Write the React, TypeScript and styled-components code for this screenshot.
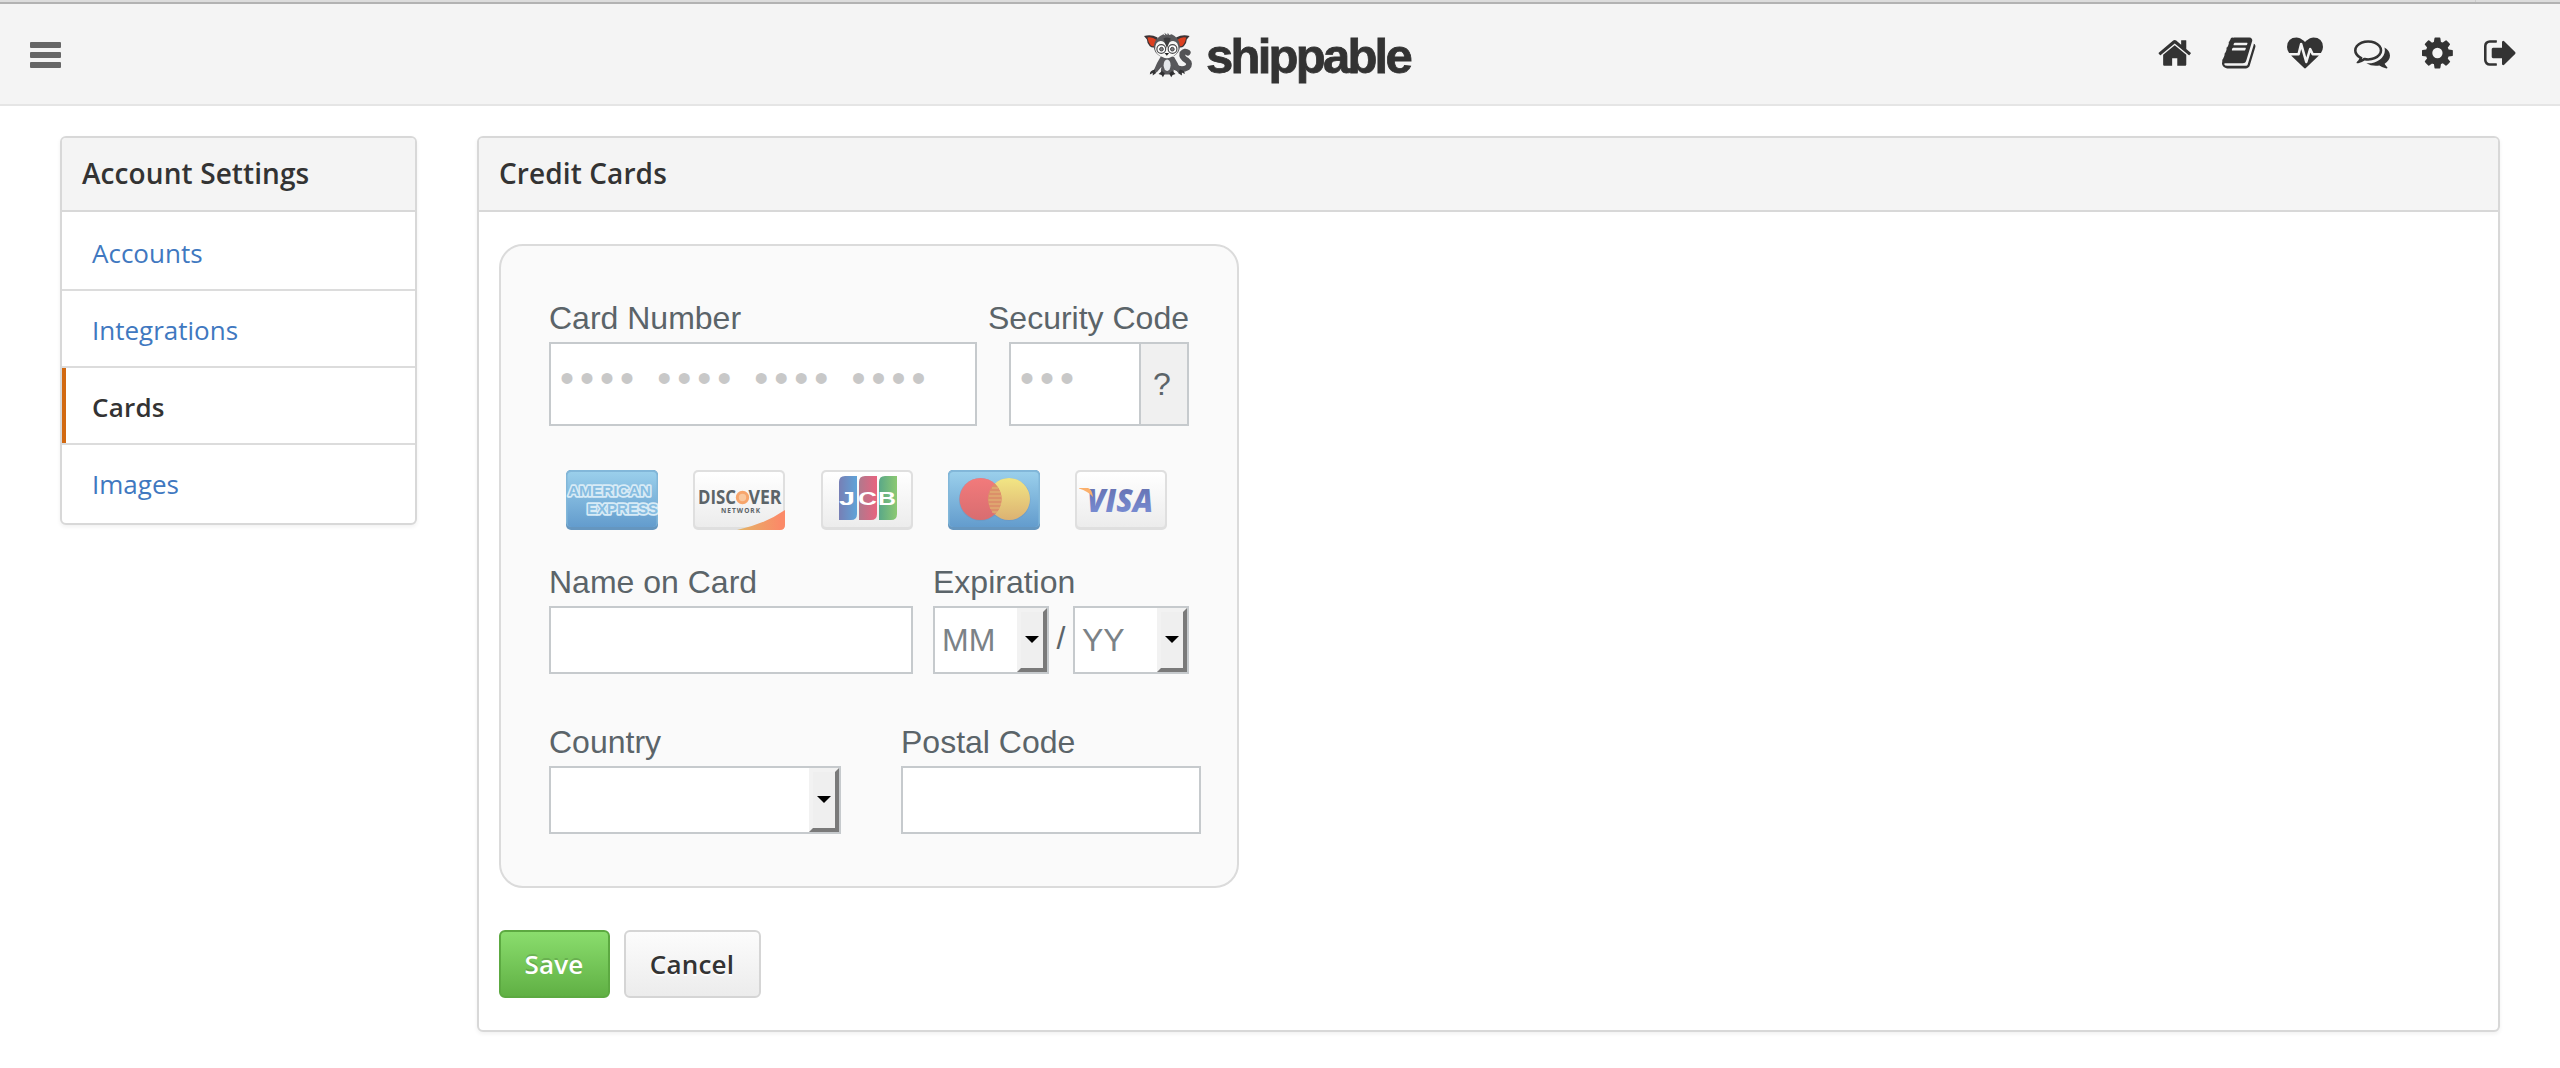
import React from 'react';
import styled, { createGlobalStyle } from 'styled-components';

const GlobalStyle = createGlobalStyle`
  *, *::before, *::after { box-sizing: border-box; }
  body {
    margin: 0;
    background: #fff;
    color: #333;
    font-family: 'Open Sans', 'Noto Sans', sans-serif;
  }
`;

const sans = `'Liberation Sans', Arial, sans-serif`;

/* ---------- top bar ---------- */

const BrowserEdge = styled.div`
  display: flex;
  justify-content: flex-end;
  height: 4px;
  background: #dcdcdc;
  border-bottom: 2px solid #b2b2b2;
  padding-right: 84px;
`;

const EdgeTick = styled.span`
  width: 1px;
  height: 2px;
  background: #cbcbcb;
`;

const Header = styled.header`
  display: grid;
  grid-template-columns: 1fr auto 1fr;
  height: 102px;
  background: #f4f4f4;
  border-bottom: 2px solid #e5e5e5;
  padding: 0 44px 0 30px;
`;

const MenuButton = styled.button`
  display: flex;
  flex-direction: column;
  justify-self: start;
  align-self: start;
  gap: 4.3px;
  margin: 38px 0 0;
  padding: 0;
  border: 0;
  background: none;
`;

const MenuBar = styled.span`
  width: 31px;
  height: 5.8px;
  border-radius: 1px;
  background: #666;
`;

const Brand = styled.a`
  display: flex;
  align-items: flex-start;
  width: 266px;
  gap: 12.5px;
  margin: 28px -4px 0 4px;
`;

const BrandName = styled.span`
  font: bold 49px/54px ${sans};
  letter-spacing: -2.75px;
  -webkit-text-stroke: 0.8px #333;
  margin-top: -3px;
  color: #333;
`;

const HeaderNav = styled.nav`
  display: flex;
  justify-self: end;
  align-items: flex-start;
  gap: 31.3px;
  padding-top: 31px;
  color: #333;
`;

const Glyph = styled.svg`
  display: block;
  height: 36px;
  fill: currentColor;
`;

/* ---------- page ---------- */

const Page = styled.main`
  display: flex;
  align-items: flex-start;
  gap: 60px;
  padding: 30px 60px 36px;
`;

const Panel = styled.section<{ $width?: number }>`
  ${(p) => (p.$width ? `width: ${p.$width}px; flex: none;` : 'flex: 1;')}
  border: 2px solid #d8d8d8;
  border-radius: 6px;
  background: #fff;
  box-shadow: 0 2px 4px rgba(0, 0, 0, 0.06);
  overflow: hidden;
`;

const PanelTitle = styled.h2`
  margin: 0;
  height: 74px;
  padding: 0 20px;
  border-bottom: 2px solid #d8d8d8;
  background: #f4f4f4;
  font-size: 28px;
  font-weight: 600;
  letter-spacing: 0.1px;
  line-height: 70px;
  white-space: nowrap;
`;

const MenuItem = styled.a<{ $active?: boolean }>`
  display: block;
  height: 77px;
  padding-left: 30px;
  border-bottom: 2px solid #dcdcdc;
  box-shadow: ${(p) => (p.$active ? 'inset 4px 0 #d26911' : 'none')};
  color: ${(p) => (p.$active ? '#333' : '#4078c0')};
  font-size: 26px;
  font-weight: ${(p) => (p.$active ? 600 : 400)};
  letter-spacing: ${(p) => (p.$active ? '0.2px' : 'normal')};
  line-height: 78px;
  text-decoration: none;

  &:first-child { height: 79px; line-height: 82px; }
  &:last-child { height: 78px; border-bottom: 0; }
`;

const MenuList = styled.nav``;

const PanelBody = styled.div`
  padding: 32px 20px;
`;

const CardForm = styled.form`
  width: 740px;
  height: 644px;
  padding: 54px 48px 0;
  border: 2px solid #dbdbdb;
  border-radius: 24px;
  background: #fafafa;
  font: 32px/36px ${sans};
  color: #5b6469;
`;

const Row = styled.div<{ $gap: number; $top?: number }>`
  display: flex;
  gap: ${(p) => p.$gap}px;
  margin-top: ${(p) => p.$top ?? 0}px;
`;

const Field = styled.div<{ $width: number; $end?: boolean }>`
  display: flex;
  flex: none;
  flex-direction: column;
  align-items: ${(p) => (p.$end ? 'flex-end' : 'flex-start')};
  gap: 6px;
  width: ${(p) => p.$width}px;
`;

const Label = styled.label`
  white-space: nowrap;
`;

const Input = styled.input`
  display: block;
  width: 100%;
  height: 68px;
  padding: 0 8px;
  border: 2px solid #c6cacd;
  border-radius: 0;
  background: #fff;
  font: 32px/36px ${sans};
  color: #5b6469;
  outline: none;
`;

const DotInput = styled(Input)`
  height: 84px;
  padding: 0 9px 12px 9px;
  font-size: 40px;
  letter-spacing: 6px;

  &::placeholder { color: #c8c8c8; opacity: 1; }
`;

const CodeGroup = styled.div`
  display: flex;
  width: 100%;
`;

const HelpButton = styled.button`
  flex: none;
  width: 48px;
  height: 84px;
  padding: 0 4px 0 0;
  border: 2px solid #c6cacd;
  border-left: 0;
  background: #f0f0f0;
  font: 32px/36px ${sans};
  color: #5b6469;
`;

const CardLogos = styled.div`
  display: flex;
  gap: 35.25px;
  margin-top: 44px;
  padding-left: 17px;
`;

const CardSvg = styled.svg`
  display: block;
  flex: none;
  width: 92px;
  height: 60px;
`;

const OutlinedText = styled.text`
  paint-order: stroke;
  stroke: #d8ebf6;
  stroke-width: 3.4px;
  stroke-linejoin: round;
`;

const SelectBox = styled.div<{ $width: number }>`
  display: flex;
  justify-content: space-between;
  width: ${(p) => p.$width}px;
  height: 68px;
  border: 2px solid #c6cacd;
  background: #fff;
  color: #7b8287;
`;

const SelectText = styled.span`
  padding: 14px 0 0 7px;
`;

const SelectArrow = styled.span`
  display: flex;
  align-items: center;
  justify-content: center;
  width: 30px;
  border: 4px solid;
  border-color: #f2f2f2 #7a7a7a #7a7a7a #f2f2f2;
  background: #efefef;

  &::after {
    content: '';
    margin-top: -1px;
    border: 7px solid transparent;
    border-top-color: #000;
    border-bottom: 0;
  }
`;

const Expiry = styled.div`
  display: flex;
  width: 100%;
`;

const Slash = styled.span`
  width: 24px;
  padding-top: 14px;
  text-align: center;
`;

const Actions = styled.div`
  display: flex;
  gap: 14px;
  margin-top: 42px;
`;

const Button = styled.button<{ $primary?: boolean; $width: number }>`
  width: ${(p) => p.$width}px;
  height: 68px;
  padding: 0 1px 0 0;
  border: 2px solid ${(p) => (p.$primary ? '#5ca941' : '#d5d5d5')};
  border-radius: 6px;
  background: ${(p) =>
    p.$primary
      ? 'linear-gradient(#8add6d, #60b044)'
      : 'linear-gradient(#fcfcfc, #ececec)'};
  color: ${(p) => (p.$primary ? '#fff' : '#333')};
  font: 600 26px/64px 'Open Sans', sans-serif;
  letter-spacing: 0.2px;
  text-shadow: ${(p) =>
    p.$primary ? '0 -2px 0 rgba(0, 0, 0, 0.15)' : '0 2px 0 rgba(255, 255, 255, 0.9)'};
`;

/* ---------- drawings ---------- */

const icons = [
  {
    name: 'Home', x: 0, w: 1664,
    d: 'M1408 992v480q0 26-19 45t-45 19h-384v-384h-256v384h-384q-26 0-45-19t-19-45v-480q0-1 .5-3t.5-3l575-474 575 474q1 2 1 6zm223-69l-62 74q-8 9-21 11h-3q-13 0-21-7l-692-577-692 577q-12 8-24 7-13-2-21-11l-62-74q-8-10-7-23.5t11-21.5l719-599q32-26 76-26t76 26l244 204v-195q0-14 9-23t23-9h192q14 0 23 9t9 23v408l219 182q10 8 11 21.5t-7 23.5z',
  },
  {
    name: 'Docs', x: 64, w: 1664,
    d: 'M1703 478q40 57 18 129l-275 906q-19 64-76.5 107.5t-122.5 43.5h-923q-77 0-148.5-53.5t-99.5-131.5q-24-67-2-127 0-4 3-27t4-37q1-8-3-21.5t-3-19.5q2-11 8-21t16.5-23.5 16.5-23.5q23-38 45-91.5t30-91.5q3-10 .5-30t-.5-28q3-11 17-28t17-23q21-36 42-92t25-90q1-9-2.5-32t.5-28q4-13 22-30.5t22-22.5q19-26 42.5-84.5t27.5-96.5q1-8-3-25.5t-2-26.5q2-8 9-18t18-23 17-21q8-12 16.5-30.5t15-35 16-36 19.5-32 26.5-23.5 36-11.5 47.5 5.5l-1 3q38-9 51-9h761q74 0 114 56t18 130l-274 906q-36 119-71.5 153.5t-128.5 34.5h-869q-27 0-38 15-11 16-1 43 24 70 144 70h923q29 0 56-15.5t35-41.5l300-987q7-22 5-57 38 15 59 43zm-1064 2q-4 13 2 22.5t20 9.5h608q13 0 25.5-9.5t16.5-22.5l21-64q4-13-2-22.5t-20-9.5h-608q-13 0-25.5 9.5t-16.5 22.5zm-83 256q-4 13 2 22.5t20 9.5h608q13 0 25.5-9.5t16.5-22.5l21-64q4-13-2-22.5t-20-9.5h-608q-13 0-25.5 9.5t-16.5 22.5z',
  },
  {
    name: 'Status', x: 0, w: 1792,
    d: 'M1280 1024h305q-5 6-10 10.5t-9 7.5l-3 4-623 600q-18 18-44 18t-44-18l-624-602q-5-2-21-20h369q22 0 39.5-13.5t22.5-34.5l70-281 190 667q6 20 23 33t39 13q21 0 38-13t23-33l146-485 56 112q18 35 57 35zm512-428q0 145-103 300h-369l-111-221q-8-17-25.5-27t-36.5-8q-45 5-56 46l-129 430-196-686q-6-20-23.5-33t-39.5-13-39 13.5-22 34.5l-116 464h-423q-103-155-103-300 0-220 127-344t351-124q62 0 126.5 21.5t120 58 95.5 68.5 76 68q36-36 76-68t95.5-68.5 120-58 126.5-21.5q224 0 351 124t127 344z',
  },
  {
    name: 'Support', x: 0, w: 1792,
    d: 'M704 384q-153 0-286 52t-211.5 141-78.5 191q0 82 53 158t149 132l97 56-35 84q34-20 62-39l44-31 53 10q78 14 153 14 153 0 286-52t211.5-141 78.5-191-78.5-191-211.5-141-286-52zm0-128q191 0 353.5 68.5t256.5 186.5 94 257-94 257-256.5 186.5-353.5 68.5q-86 0-176-16-124 88-278 128-36 9-86 16h-3q-11 0-20.5-8t-11.5-21q-1-3-1-6.5t.5-6.5 2-6l2.5-5 3.5-5.5 4-5 4.5-5 4-4.5q5-6 23-25t26-29.5 22.5-29 25-38.5 20.5-44q-124-72-195-177t-71-224q0-139 94-257t256.5-186.5 353.5-68.5zm822 1169q10 24 20.5 44t25 38.5 22.5 29 26 29.5 23 25q1 1 4 4.5t4.5 5 4 5 3.5 5.5l2.5 5 2 6 .5 6.5-1 6.5q-3 14-13 22t-22 7q-50-7-86-16-154-40-278-128-90 16-176 16-271 0-472-132 58 4 88 4 161 0 309-45t264-129q125-92 192-212t67-254q0-77-23-152 129 71 204 178t75 230q0 120-71 224.5t-195 176.5z',
  },
  {
    name: 'Settings', x: 128, w: 1536,
    d: 'M1152 896q0-106-75-181t-181-75-181 75-75 181 75 181 181 75 181-75 75-181zm512-109v222q0 12-8 23t-20 13l-185 28q-19 54-39 91 35 50 107 138 10 12 10 25t-9 23q-27 37-99 108t-94 71q-12 0-26-9l-138-108q-44 23-91 38-16 136-29 186-7 28-36 28h-222q-14 0-24.5-8.5t-11.5-21.5l-28-184q-49-16-90-37l-141 107q-10 9-25 9-14 0-25-11-126-114-165-168-7-10-7-23 0-12 8-23 15-21 51-66.5t54-70.5q-27-50-41-99l-183-27q-13-2-21-12.5t-8-23.5v-222q0-12 8-23t19-13l186-28q14-46 39-92-40-57-107-138-10-12-10-24 0-10 9-23 26-36 98.5-107.5t94.5-71.5q13 0 26 10l138 107q44-23 91-38 16-136 29-186 7-28 36-28h222q14 0 24.5 8.5t11.5 21.5l28 184q49 16 90 37l142-107q9-9 24-9 13 0 25 10 129 119 165 170 7 8 7 22 0 12-8 23-15 21-51 66.5t-54 70.5q26 50 41 98l183 28q13 2 21 12.5t8 23.5z',
  },
  {
    name: 'Sign out', x: 64, w: 1600,
    d: 'M704 1440q0 4 1 20t.5 26.5-3 23.5-10 19.5-20.5 6.5h-320q-119 0-203.5-84.5t-84.5-203.5v-704q0-119 84.5-203.5t203.5-84.5h320q13 0 22.5 9.5t9.5 22.5q0 4 1 20t.5 26.5-3 23.5-10 19.5-20.5 6.5h-320q-66 0-113 47t-47 113v704q0 66 47 113t113 47h312l11.5 1 11.5 3 8 5.5 7 9 2 13.5zm928-544q0 26-19 45l-544 544q-19 19-45 19t-45-19-19-45v-288h-448q-26 0-45-19t-19-45v-384q0-26 19-45t45-19h448v-288q0-26 19-45t45-19 45 19l544 544q19 19 19 45z',
  },
];

const Mascot = () => (
  <svg width="51" height="47" viewBox="0 0 51 47">
    <path d="M32 35.500Q39 39.500 44.500 36Q48.500 32 44 28.500Q38.500 25.500 39.500 21.500Q42 18 45 20.500" fill="none" stroke="#535356" strokeWidth="6" strokeLinecap="round" />
    <path d="M0 3.500Q7 1 14 5L12 14.500Q9 16.500 6 14Q3 11 3 7Z" fill="#3c3436" />
    <path d="M47 3.500Q40 1 33 5L35 14.500Q38 16.500 41 14Q44 11 44 7Z" fill="#3c3436" />
    <path d="M3.500 5Q8 3.500 13 7.500L11 13.500Q8.500 15 6.500 12.500Q4.500 10 3.500 5Z" fill="#dc4020" />
    <path d="M43.500 5Q39 3.500 34 7.500L36 13.500Q38.500 15 40.500 12.500Q42.500 10 43.500 5Z" fill="#dc4020" />
    <path d="M17 25Q13 31 10 39L13 41L18 35Q16 43 20 43H28Q32 43 30 35L35 41L38 39Q35 31 31 25Z" fill="#58585b" />
    <path d="M11 38Q6 39 6 43L9 41.500V44L12.500 41.500ZM37 38Q42 39 42 42.500L39 41V44L35 41.500Z" fill="#333335" />
    <path d="M20 1.500L22 3L21 0L24 2.500L24.500 0L26 2.500L28.500 1.500Q36.500 5 37 14Q37 20 31 24Q23.500 28 16 24Q10 20 10 14Q11 5 20 1.500Z" fill="#59595c" />
    <path d="M11.500 17Q11.500 9 17 8.500Q21 8.500 23.500 14Q26 8.500 30 8.500Q35.500 9 35.500 17Q34 23 28 25Q23.500 27.500 19 25Q13 23 11.500 17Z" fill="#f7f7f5" />
    <path d="M20 6Q23.500 4 27.500 6L23.600 16Z" fill="#3b3b3d" />
    <circle cx="17.800" cy="16.800" r="4.500" fill="#fff" stroke="#48484a" strokeWidth="1.200" />
    <circle cx="29.400" cy="16.800" r="4.500" fill="#fff" stroke="#48484a" strokeWidth="1.200" />
    <circle cx="18" cy="17" r="1.900" fill="#7e7e80" stroke="#39393b" strokeWidth=".9" />
    <circle cx="29.200" cy="17" r="1.900" fill="#7e7e80" stroke="#39393b" strokeWidth=".9" />
    <path d="M21.200 21H25.800L23.500 23.700Z" fill="#222" />
    <ellipse cx="23.800" cy="33.500" rx="3.600" ry="6" fill="#e4e7ea" />
    <path d="M15 42.500L18.500 39.500L21.500 42L19.500 46L18 43.500ZM26 42L29 39.500L32.500 42.500L29.500 43.500L28 46Z" fill="#2f2f31" />
  </svg>
);

const Defs = () => (
  <defs>
    <linearGradient id="paper" x1="0" y1="0" x2="0" y2="1">
      <stop offset="0" stopColor="#fff" />
      <stop offset="1" stopColor="#ececec" />
    </linearGradient>
    <linearGradient id="sky" x1="0" y1="0" x2="0" y2="1">
      <stop offset="0" stopColor="#9acfeb" />
      <stop offset="1" stopColor="#639ccd" />
    </linearGradient>
    <linearGradient id="flame" x1="0" y1="0" x2="1" y2="0">
      <stop offset="0" stopColor="#e3b566" />
      <stop offset=".9" stopColor="#fb8a68" />
    </linearGradient>
    <linearGradient id="jBlue"><stop offset="0" stopColor="#777fb5" /><stop offset="1" stopColor="#5fa3d8" /></linearGradient>
    <linearGradient id="jRed"><stop offset="0" stopColor="#b0798d" /><stop offset="1" stopColor="#e8637f" /></linearGradient>
    <linearGradient id="jGreen"><stop offset="0" stopColor="#5aa888" /><stop offset="1" stopColor="#8cc972" /></linearGradient>
    <linearGradient id="mRed" x1="0" y1="0" x2="0" y2="1"><stop offset="0" stopColor="#f27a7b" /><stop offset="1" stopColor="#d86d70" /></linearGradient>
    <linearGradient id="mGold" x1="0" y1="0" x2="0" y2="1"><stop offset="0" stopColor="#f2e684" /><stop offset="1" stopColor="#dcb272" /></linearGradient>
    <linearGradient id="vInk" x1="0" y1="0" x2="0" y2="1"><stop offset="0" stopColor="#5f6aa8" /><stop offset="1" stopColor="#7d92da" /></linearGradient>
    <clipPath id="plate"><rect width="92" height="60" rx="5" /></clipPath>
  </defs>
);

const WhitePlate = () => (
  <>
    <rect width="92" height="60" rx="5" fill="#dfdfdf" />
    <rect x="2" y="2" width="88" height="55" rx="3.500" fill="url(#paper)" />
  </>
);

const BluePlate = () => (
  <>
    <rect width="92" height="60" rx="5" fill="#6596bf" />
    <rect width="92" height="57" rx="5" fill="#82b7d9" />
    <rect x="1.500" y="2" width="89" height="55" rx="4" fill="url(#sky)" />
  </>
);

const Amex = () => (
  <CardSvg viewBox="0 0 92 60">
    <Defs />
    <BluePlate />
    <g clipPath="url(#plate)" fontFamily="Liberation Sans" fontWeight="bold" fontSize="15.500" fill="#86bde1">
      <OutlinedText x="2" y="25.600" textLength="83" lengthAdjust="spacingAndGlyphs">AMERICAN</OutlinedText>
      <OutlinedText x="21" y="44" textLength="71" lengthAdjust="spacingAndGlyphs">EXPRESS</OutlinedText>
    </g>
  </CardSvg>
);

const Discover = () => (
  <CardSvg viewBox="0 0 92 60">
    <WhitePlate />
    <path d="M44 60Q72 54 92 40V55Q92 60 87 60Z" fill="url(#flame)" />
    <g fontFamily="Open Sans" fontWeight="bold" fill="#5c6468">
      <text x="5" y="34" fontSize="19" textLength="38" lengthAdjust="spacingAndGlyphs">DISC</text>
      <text x="55.500" y="34" fontSize="19" textLength="33" lengthAdjust="spacingAndGlyphs">VER</text>
      <text x="28" y="43" fontSize="6.500" textLength="39">NETWORK</text>
    </g>
    <circle cx="49.500" cy="27.500" r="5.200" fill="#f9c79d" stroke="#f7a56c" strokeWidth="3" />
  </CardSvg>
);

const Jcb = () => (
  <CardSvg viewBox="0 0 92 60">
    <WhitePlate />
    <path d="M24 6H36V44Q36 50 30 50H18V12Q18 6 24 6Z" fill="url(#jBlue)" />
    <path d="M44 6H56V44Q56 50 50 50H38V12Q38 6 44 6Z" fill="url(#jRed)" />
    <path d="M64 6H76V44Q76 50 70 50H58V12Q58 6 64 6Z" fill="url(#jGreen)" />
    <g fontFamily="Liberation Sans" fontWeight="bold" fontSize="18.500" fill="#fff">
      <text x="18" y="34.500" textLength="16" lengthAdjust="spacingAndGlyphs">J</text>
      <text x="37" y="34.500" textLength="19" lengthAdjust="spacingAndGlyphs">C</text>
      <text x="57" y="34.500" textLength="18" lengthAdjust="spacingAndGlyphs">B</text>
    </g>
  </CardSvg>
);

const Mastercard = () => (
  <CardSvg viewBox="0 0 92 60">
    <BluePlate />
    <circle cx="32.500" cy="29.500" r="21.500" fill="#6f8fb8" opacity=".5" />
    <circle cx="61" cy="29.500" r="21.500" fill="#6f8fb8" opacity=".4" />
    <circle cx="61" cy="29" r="21" fill="url(#mGold)" />
    <circle cx="32.500" cy="29" r="21" fill="url(#mRed)" />
    <path d="M46.700 13.500A21 21 0 0 1 46.700 44.500A21 21 0 0 1 46.700 13.500Z" fill="#dc9069" />
    <path d="M44 18H50M42 22H52M41 26H53M40.500 30H53.500M41 34H53M42 38H52M44 42H50" stroke="#e2b977" strokeWidth="1.200" />
  </CardSvg>
);

const Visa = () => (
  <CardSvg viewBox="0 0 92 60">
    <WhitePlate />
    <text x="12" y="41.500" fontFamily="Open Sans" fontWeight="800" fontStyle="italic" fontSize="32" fill="url(#vInk)" textLength="66" lengthAdjust="spacingAndGlyphs">VISA</text>
    <path d="M4 18H13Q17 19 18 27Q13 21 4 18.500Z" fill="#fbb06c" />
  </CardSvg>
);

/* ---------- app ---------- */

const menu = ['Accounts', 'Integrations', 'Cards', 'Images'];

const Select = ({ width, text }: { width: number; text?: string }) => (
  <SelectBox $width={width}>
    <SelectText>{text}</SelectText>
    <SelectArrow />
  </SelectBox>
);

export default function App() {
  return (
    <>
      <GlobalStyle />
      <BrowserEdge><EdgeTick /></BrowserEdge>
      <Header>
        <MenuButton aria-label="Menu"><MenuBar /><MenuBar /><MenuBar /></MenuButton>
        <Brand>
          <Mascot />
          <BrandName>shippable</BrandName>
        </Brand>
        <HeaderNav>
          {icons.map((icon) => (
            <Glyph
              key={icon.name}
              aria-label={icon.name}
              viewBox={`${icon.x} 0 ${icon.w} 1792`}
              width={(icon.w * 36) / 1792}
            >
              <path d={icon.d} />
            </Glyph>
          ))}
        </HeaderNav>
      </Header>
      <Page>
        <Panel $width={357}>
          <PanelTitle>Account Settings</PanelTitle>
          <MenuList>
            {menu.map((item) => (
              <MenuItem key={item} $active={item === 'Cards'}>{item}</MenuItem>
            ))}
          </MenuList>
        </Panel>
        <Panel>
          <PanelTitle>Credit Cards</PanelTitle>
          <PanelBody>
            <CardForm>
              <Row $gap={32}>
                <Field $width={428}>
                  <Label>Card Number</Label>
                  <DotInput placeholder="•••• •••• •••• ••••" />
                </Field>
                <Field $width={180} $end>
                  <Label>Security Code</Label>
                  <CodeGroup>
                    <DotInput placeholder="•••" />
                    <HelpButton type="button">?</HelpButton>
                  </CodeGroup>
                </Field>
              </Row>
              <CardLogos>
                <Amex />
                <Discover />
                <Jcb />
                <Mastercard />
                <Visa />
              </CardLogos>
              <Row $gap={20} $top={34}>
                <Field $width={364}>
                  <Label>Name on Card</Label>
                  <Input />
                </Field>
                <Field $width={256}>
                  <Label>Expiration</Label>
                  <Expiry>
                    <Select width={116} text="MM" />
                    <Slash>/</Slash>
                    <Select width={116} text="YY" />
                  </Expiry>
                </Field>
              </Row>
              <Row $gap={60} $top={50}>
                <Field $width={292}>
                  <Label>Country</Label>
                  <Select width={292} />
                </Field>
                <Field $width={300}>
                  <Label>Postal Code</Label>
                  <Input />
                </Field>
              </Row>
            </CardForm>
            <Actions>
              <Button $primary $width={111}>Save</Button>
              <Button $width={137}>Cancel</Button>
            </Actions>
          </PanelBody>
        </Panel>
      </Page>
    </>
  );
}
